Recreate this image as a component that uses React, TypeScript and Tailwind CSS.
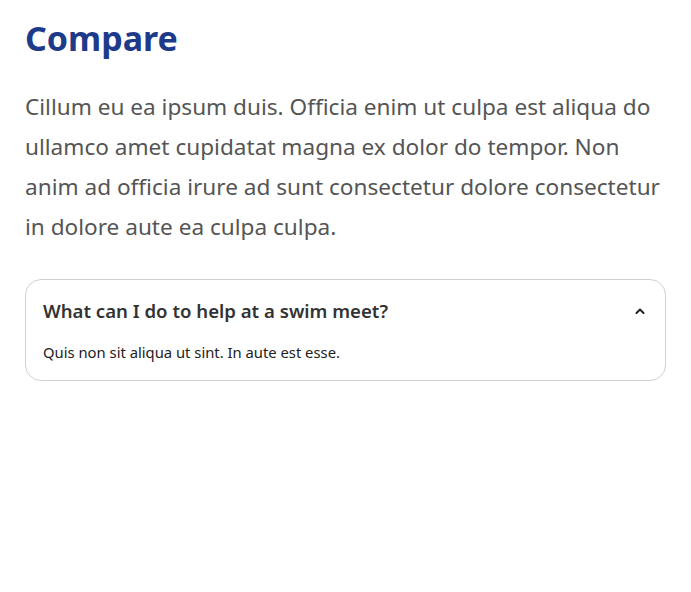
import React from "react";

export default function App() {
  return (
    <div className="min-h-[592px] bg-white" style={{ fontFamily: '"Segoe UI", "Noto Sans", sans-serif' }}>
      <div className="mx-auto w-[641px] pt-[14px]">
        <h1 className="text-[34px] font-bold leading-[48px] text-[#1e3a8a]">Compare</h1>
        <p className="mt-[25px] text-[22.6px] leading-[40px] text-[#555555]">
          Cillum eu ea ipsum duis. Officia enim ut culpa est aliqua do ullamco amet cupidatat magna ex dolor do tempor. Non anim ad officia irure ad sunt consectetur dolore consectetur in dolore aute ea culpa culpa.
        </p>
        <div className="mt-[32px] rounded-[16px] border border-[#d1d1d1] px-[17px] pt-[17px] pb-[18px]">
          <div className="flex items-center justify-between">
            <span className="text-[18.6px] font-semibold leading-[28px] text-[#333333]">What can I do to help at a swim meet?</span>
            <svg width="12" height="12" viewBox="0 0 24 24" fill="none" stroke="#222" strokeWidth="4" strokeLinecap="round" strokeLinejoin="round" className="mr-[2px]">
              <path d="M5 16l7-7 7 7" />
            </svg>
          </div>
          <p className="mt-[17px] text-[14.8px] leading-[20px] text-[#222222]">Quis non sit aliqua ut sint. In aute est esse.</p>
        </div>
      </div>
    </div>
  );
}
